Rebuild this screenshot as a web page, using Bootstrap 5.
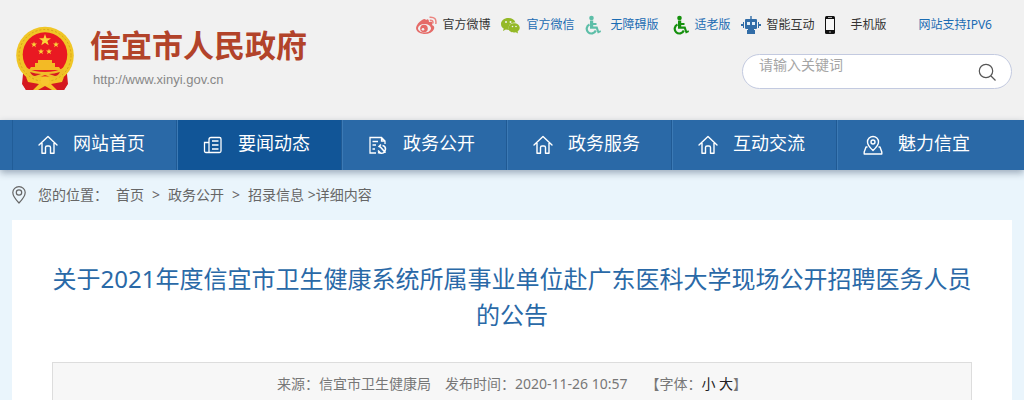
<!DOCTYPE html>
<html lang="zh-CN">
<head>
<meta charset="utf-8">
<meta name="viewport" content="width=device-width, initial-scale=1">
<title>信宜市人民政府</title>
<link href="https://cdn.jsdelivr.net/npm/bootstrap@5.3.0/dist/css/bootstrap.min.css" rel="stylesheet">
<style>
body{background:#eaf5fc;font-family:"Noto Sans","Noto Sans CJK SC",sans-serif;font-size:14px;line-height:24px;color:#666}
a{color:inherit;text-decoration:none}
svg{flex:none;display:block}
.wrap{padding-left:12px;padding-right:12px}
.site-head{background:#f1f1f1;min-height:120px}
.brand-link{padding:24px 0 0 2px;gap:14px}
.brand-name{font-size:31px;line-height:40px;font-weight:700;color:#b2432a;font-family:"Noto Sans CJK SC",sans-serif;white-space:nowrap}
.brand-url{font:13px/16px "Liberation Sans",sans-serif;color:#888;margin-top:8px;padding-left:3px}
.tools{font-size:12px;line-height:20px;color:#333;padding:15px 20px 0 0;white-space:nowrap}
.tools a{display:flex;align-items:center}
.tools .hot{color:#1b6cb3}
.search{width:270px;height:35px;border:1px solid #c3cae0;border-radius:18px;background:#fff;margin-top:19px;padding:0 14px 0 16px}
.search input{border:0;outline:0;background:none;min-width:0;font-size:14px;line-height:20px;padding:0;color:#666;height:20px}
.search input::placeholder{color:#a5a5a5;opacity:1}
.search button{border:0;background:none;padding:0;margin-top:8px}
.main-nav{background:#2a69a7;box-shadow:0 3px 7px rgba(40,60,90,.4);position:relative;color:#fff;font-size:18px}
.main-nav a{width:16.5%;height:50px;gap:15px;padding:0 0 4px 25px;border-left:1px solid #3c7ab5;box-shadow:-1px 0 #205a94;white-space:nowrap}
.main-nav a:first-child{border-left-color:#215d98;box-shadow:none}
.main-nav a.active{background:#115597}
.main-nav svg{margin-top:4px}
.crumbs{height:50px;gap:8px;white-space:nowrap}
.article{background:#fff;padding:41px 40px 0;min-height:180px}
.article h1{font-size:24px;line-height:36px;font-weight:400;color:#2a69a7;margin:0 0 29px;text-align:center}
.meta-bar{background:#f7f7f7;border:1px solid #ddd;padding:9px 0;min-height:44px;color:#777;white-space:nowrap}
.meta-bar .published{margin:0 18px 0 14px}
.meta-bar button{border:0;background:none;padding:0;color:#222}
</style>
</head>
<body>
<svg width="0" height="0" class="position-absolute" aria-hidden="true">
<symbol id="home" viewBox="0 0 20 20"><path d="M1 10 10 1.5 19 10M4 8V18.3H7.5V12.5Q7.5 11 9 11H11Q12.5 11 12.5 12.5V18.3H16V8" fill="none" stroke="currentColor" stroke-width="1.4" stroke-linejoin="round" stroke-linecap="round"/></symbol>
<symbol id="chair" viewBox="0 0 16 20"><circle cx="6.500" cy="3" r="2.300"/><path d="M5 5.500H8.200V8H11.500V10H8.200V11.500H12.500L14 16 15.500 15.300 16 17 12.800 18.600 11 13.800H5Z"/><path d="M4.500 9.500A4.700 4.700 0 1 0 10.800 15.500" fill="none" stroke="currentColor" stroke-width="2.200"/></symbol>
</svg>
<header class="site-head wrap d-flex justify-content-between">
<a href="#" class="brand-link d-flex align-items-start">
<svg width="62" height="67" viewBox="0 0 62 67">
<path d="M9 46V60L12 66H50L53 60V46Z" fill="#cf1720"/>
<circle cx="31" cy="31.500" r="28.800" fill="#f0c626"/><circle cx="31" cy="31.500" r="26" fill="none" stroke="#d7a11a" stroke-width="1" stroke-dasharray="2 2"/>
<path d="M9 50Q18 61 31 61T53 50L54 60 50 66H12L8 60Z" fill="#d51920"/>
<circle cx="31" cy="30.500" r="22.300" fill="#e91922"/>
<path d="M31 10 32.500 14.300H37L33.400 17 34.700 21.300 31 18.700 27.300 21.300 28.600 17 25 14.300H29.500Z" fill="#fbd439"/>
<g fill="#fbd439"><path id="s" d="M20 17.500 20.700 19.500H23L21.200 20.900 21.900 23.200 20 21.800 18.100 23.200 18.800 20.900 17 19.500H19.300Z"/><use href="#s" x="22"/><use href="#s" x="7" y="7"/><use href="#s" x="15" y="7"/></g>
<path d="M24 36H38V39H41V43H45L47 46H15L17 43H21V39H24Z" fill="#f3ba25"/>
<path d="M13 44Q20 48 31 48T49 44L50 48Q45 54 39 54L31 51 23 54Q17 54 12 48Z" fill="#efbd2a"/>
<path d="M16 48Q22 50 27 50L21 52Q18 52 16 48M46 48Q40 50 35 50L41 52Q44 52 46 48" fill="#d61a20"/>
<path d="M12 53 22 57H40L50 53 48 58 37 60 43 66H38L31 62 24 66H19L25 60 14 58Z" fill="#f5c228"/>
<circle cx="31" cy="57" r="4.500" fill="#f7c62f"/>
</svg>
<span><span class="brand-name d-block">信宜市人民政府</span><span class="brand-url d-block">http://www.xinyi.gov.cn</span></span>
</a>
<div class="d-flex flex-column align-items-end">
<nav class="tools d-flex" aria-label="快捷入口">
<a href="#" style="gap:6px;margin-right:10px"><svg width="21" height="19" viewBox="0 0 21 19"><path d="M10 4Q13 2 13 6Q18 5 16 9Q19 10 18 13Q16 18 8 18Q0 17 0 12Q1 7 6 4Q9 2 10 4" fill="#e56b68"/><ellipse cx="8.500" cy="12.300" rx="6.500" ry="4.300" fill="#f1f1f1"/><circle cx="8" cy="12.500" r="3.800" fill="#e56b68"/><circle cx="7" cy="13.200" r="1.300" fill="#f1f1f1"/><path d="M13.500 1.200Q21 .5 19.800 8M13.800 4.200Q17.500 4 16.900 7.300" fill="none" stroke="#ec8580" stroke-width="1.500"/></svg>官方微博</a>
<a href="#" class="hot" style="gap:7px;margin-right:10px"><svg width="19" height="17" viewBox="0 0 19 17"><path d="M7.500 1C3 1 0 3.700 0 7 0 9 1 10.500 2.700 11.500L2 14 4.800 12.600 8 13C6.500 8 10 5.500 14.500 5.500 13.500 2.500 11 1 7.500 1" fill="#94b927"/><path d="M13 6.200C9.500 6.200 7.500 8.500 7.500 11 7.500 14.500 11 16 14.800 15.200L17 16.500 16.600 14.500C21 11 18 6.200 13 6.200" fill="#94b927"/><g fill="#f1f1f1"><circle cx="5" cy="5" r="1"/><circle cx="9.500" cy="5" r="1"/><circle cx="11.500" cy="9.500" r=".8"/><circle cx="15" cy="9.500" r=".8"/></g></svg>官方微信</a>
<a href="#" class="hot" style="gap:10px;margin-right:14px"><svg width="16" height="20" fill="#5dbea8" style="color:#5dbea8"><use href="#chair"/></svg>无障碍版</a>
<a href="#" class="hot" style="gap:6px;margin-right:10px"><svg width="16" height="20" fill="#15900d" style="color:#15900d"><use href="#chair"/></svg>适老版</a>
<a href="#" style="gap:6px;margin-right:10px"><svg width="20" height="19" viewBox="0 0 20 19"><path d="M9.300 0H10.700V3H15Q16 3 16 4V12Q16 13 15 13H13V14H14V18H6V14H7V13H5Q4 13 4 12V4Q4 3 5 3H9.300ZM2 6H3V12H2V10H0V8H2ZM17 6H18V8H20V10H18V12H17Z" fill="#326da7"/><path d="M6 6H9V9H6ZM11 6H14V9H11Z" fill="#e3eff8"/></svg>智能互动</a>
<a href="#" style="gap:16px;margin-right:32px"><svg width="10" height="18" viewBox="0 0 10 18"><rect width="10" height="18" rx="1.500" fill="#111"/><path d="M1 3H9V14H1Z" fill="#f7f7f7"/><path d="M3 1.500H7M4 16H6" stroke="#aaa"/></svg>手机版</a>
<a href="#" class="hot">网站支持IPV6</a>
</nav>
<form class="search d-flex align-items-start"><input type="text" class="flex-grow-1" placeholder="请输入关键词" aria-label="请输入关键词"><button type="button" aria-label="搜索"><svg width="20" height="20" viewBox="0 0 20 20" fill="none" stroke="#555" stroke-width="1.200"><circle cx="9" cy="8" r="6.700"/><path d="m14 13 4.500 4.500"/></svg></button></form>
</div>
</header>
<nav class="main-nav wrap d-flex" aria-label="主导航">
<a href="#" class="d-flex align-items-center"><svg width="20" height="20"><use href="#home"/></svg>网站首页</a>
<a href="#" class="active d-flex align-items-center"><svg width="20" height="20" viewBox="0 0 20 20" fill="none" stroke="currentColor" stroke-width="1.300"><path d="M6 17.500V4.500Q6 2.500 8 2.500H16.500Q18 2.500 18 4V16Q18 17.500 16.500 17.500H3Q1.500 17.500 1.500 16V7.500H6M9 6H15.500M9 10H15.500M9 14H15.500"/></svg>要闻动态</a>
<a href="#" class="d-flex align-items-center"><svg width="20" height="20" viewBox="0 0 20 20" fill="none" stroke="currentColor" stroke-width="1.300"><path d="M17 9V6L13.500 2.500H2V18H8M13.500 2.500V6H17M4.500 6.500H10M4.500 10H8M4.500 14H7"/><path d="M10 17.500Q17 20 17.500 14Q17.500 11 14.500 10.500M10.500 12 13 9.500M11.500 11 17.500 17.800M10 15.500 12.500 18" stroke-width="1.600"/></svg>政务公开</a>
<a href="#" class="d-flex align-items-center"><svg width="20" height="20"><use href="#home"/></svg>政务服务</a>
<a href="#" class="d-flex align-items-center"><svg width="20" height="20"><use href="#home"/></svg>互动交流</a>
<a href="#" class="d-flex align-items-center"><svg width="20" height="20" viewBox="0 0 20 20" fill="none" stroke="currentColor" stroke-width="1.400" stroke-linejoin="round"><path d="M10 15.500Q4.500 10.500 4.500 7A5.500 5.500 0 0 1 15.500 7Q15.500 10.500 10 15.500ZM4.500 12H3L1.200 17V19H18.800V17L17 12H15.500"/><circle cx="10" cy="7" r="2"/></svg>魅力信宜</a>
</nav>
<nav class="crumbs wrap d-flex align-items-center" aria-label="您的位置">
<svg width="14" height="18" viewBox="0 0 14 18" fill="none" stroke="#666" stroke-width="1.200"><path d="M7 17Q.8 10.500.8 6.500A6.200 5.800 0 0 1 13.200 6.500Q13.200 10.500 7 17Z"/><circle cx="7" cy="6.500" r="2.700"/></svg>
<span class="ms-1">您的位置：</span><a href="#">首页</a><span>&gt;</span><a href="#">政务公开</a><span>&gt;</span><span><a href="#">招录信息</a> &gt;详细内容</span>
</nav>
<div class="wrap">
<main class="article">
<h1>关于2021年度信宜市卫生健康系统所属事业单位赴广东医科大学现场公开招聘医务人员的公告</h1>
<div class="meta-bar d-flex justify-content-center"><span>来源：信宜市卫生健康局</span><span class="published">发布时间：2020-11-26 10:57</span><span>【字体：<button type="button">小</button> <button type="button">大</button>】</span></div>
</main>
</div>
<script src="https://cdn.jsdelivr.net/npm/bootstrap@5.3.0/dist/js/bootstrap.bundle.min.js"></script>
</body>
</html>
